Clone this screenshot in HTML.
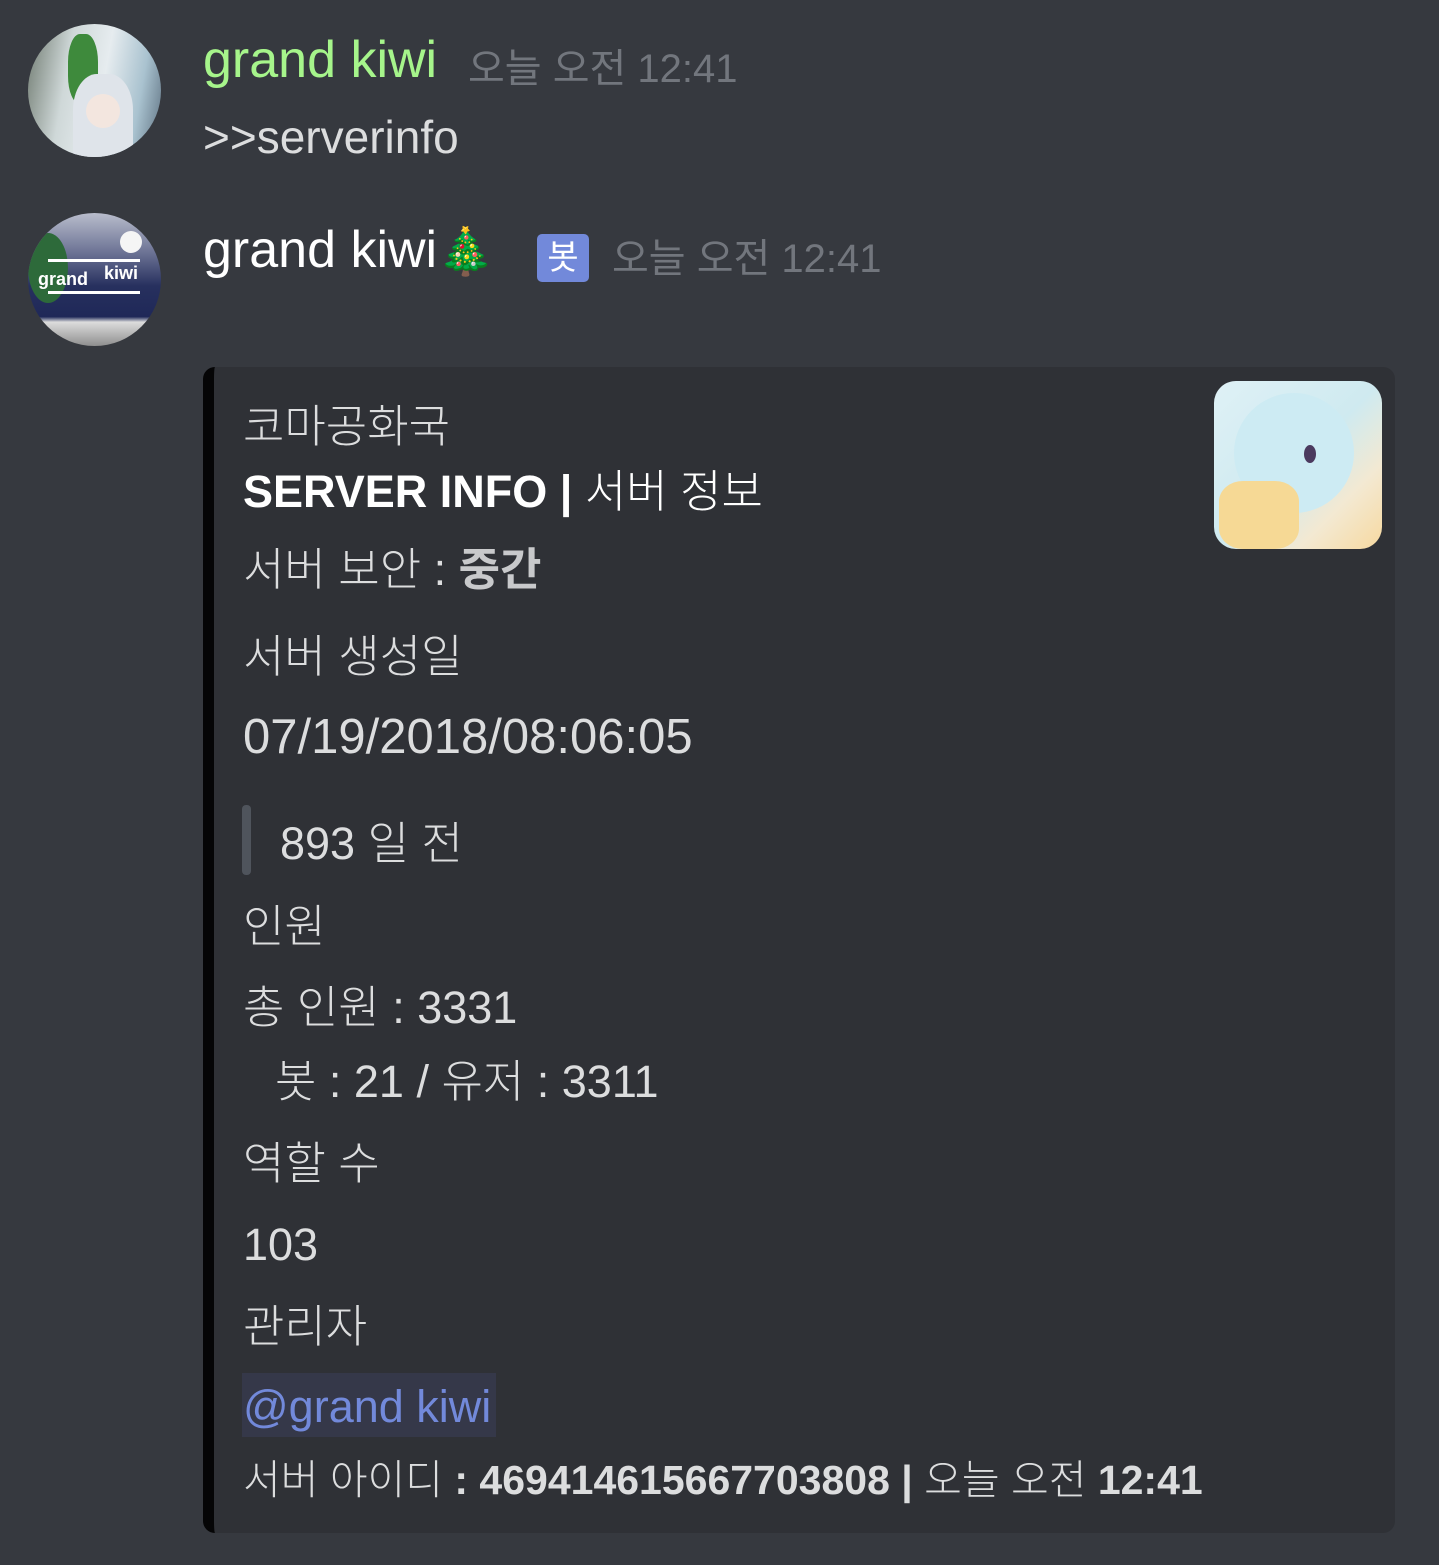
<!DOCTYPE html>
<html><head><meta charset="utf-8"><style>
body{margin:0;width:1439px;height:1565px;background:#36393f;overflow:hidden;font-family:"Liberation Sans","Noto Sans CJK KR",sans-serif;color:#dcddde;position:relative}
.a{position:absolute;white-space:nowrap}
.av{position:absolute;width:133px;height:133px;border-radius:50%;overflow:hidden}
.ts{color:#72767d;font-size:38px}
.l{position:absolute;left:243px;font-size:45px;line-height:64px;white-space:nowrap;font-weight:300}
b{font-weight:700}
</style></head><body>
<div class="av" style="left:28px;top:24px;background:linear-gradient(100deg,#6f7a70 0%,#cfd8d8 30%,#e6ecef 55%,#a9c2cf 80%,#5d7080 100%)">
 <div style="position:absolute;left:40px;top:10px;width:30px;height:70px;background:#3e8a3c;border-radius:40%"></div>
 <div style="position:absolute;left:45px;top:50px;width:60px;height:90px;background:#dfe4ea;border-radius:40% 40% 10% 10%"></div>
 <div style="position:absolute;left:58px;top:70px;width:34px;height:34px;background:#f3e6df;border-radius:50%"></div>
</div>
<div class="a" style="left:203px;top:30px;font-size:52px;color:#a6f58b">grand kiwi</div>
<div class="a ts" style="left:468px;top:36px;font-size:40px">오늘 오전 12:41</div>
<div class="a" style="left:203px;top:110px;font-size:46px">&gt;&gt;serverinfo</div>

<div class="av" style="left:28px;top:213px;background:linear-gradient(180deg,#b9bdcc 0%,#6b7294 30%,#27305e 55%,#1f2858 78%,#dcdcdc 82%,#8f8f8f 100%)">
 <div style="position:absolute;left:0;top:20px;width:40px;height:70px;background:#2d6a3a;border-radius:50%"></div>
 <div style="position:absolute;left:92px;top:18px;width:22px;height:22px;background:#f5f5f5;border-radius:50%"></div>
 <div style="position:absolute;left:20px;top:46px;width:92px;height:3px;background:#fff"></div>
 <div style="position:absolute;left:20px;top:78px;width:92px;height:3px;background:#fff"></div>
 <div class="a" style="left:10px;top:56px;font-size:18px;font-weight:700;color:#fff">grand</div>
 <div class="a" style="left:76px;top:50px;font-size:18px;font-weight:700;color:#fff">kiwi</div>
</div>
<div class="a" style="left:203px;top:220px;font-size:52px;color:#fff">grand kiwi<span style="font-size:46px">🎄</span></div>
<div class="a" style="left:537px;top:234px;width:52px;height:48px;background:#7289da;border-radius:5px;color:#fff;font-size:34px;text-align:center;line-height:48px">봇</div>
<div class="a ts" style="left:612px;top:226px;font-size:40px">오늘 오전 12:41</div>

<div class="a" style="left:203px;top:367px;width:1192px;height:1166px;background:#2f3136;border-radius:12px;border-left:11px solid #050506;box-sizing:border-box"></div>
<div class="a" style="left:1214px;top:381px;width:168px;height:168px;border-radius:22px;background:linear-gradient(135deg,#dff1f6 0%,#cfeaf0 50%,#f3e9d2 75%,#f7d9a0 100%);overflow:hidden">
 <div style="position:absolute;left:20px;top:12px;width:120px;height:120px;background:#cdebf3;border-radius:50%"></div>
 <div style="position:absolute;left:90px;top:64px;width:12px;height:18px;background:#4b3a5e;border-radius:50%"></div>
 <div style="position:absolute;left:5px;top:100px;width:80px;height:68px;background:#f6d995;border-radius:30%"></div>
</div>

<div class="l" style="top:395px">코마공화국</div>
<div class="l" style="top:460px;color:#fff"><b>SERVER INFO |</b> 서버 정보</div>
<div class="l" style="top:538px">서버 보안 : <b style="color:#c8c9cb">중간</b></div>
<div class="l" style="top:625px">서버 생성일</div>
<div class="l" style="top:705px;font-size:49px">07/19/2018/08:06:05</div>
<div class="a" style="left:242px;top:805px;width:9px;height:70px;background:#4f545c;border-radius:4px"></div>
<div class="l" style="left:280px;top:812px">893 일 전</div>
<div class="l" style="top:895px">인원</div>
<div class="l" style="top:976px">총 인원 : 3331</div>
<div class="l" style="left:275px;top:1050px">봇 : 21 / 유저 : 3311</div>
<div class="l" style="top:1132px">역할 수</div>
<div class="l" style="top:1213px">103</div>
<div class="l" style="top:1295px">관리자</div>
<div class="a" style="left:242px;top:1373px;width:254px;height:64px;background:#353849"></div>
<div class="l" style="top:1375px;color:#7289da;font-weight:400">@grand kiwi</div>
<div class="l" style="top:1448px;font-size:41px">서버 아이디 <b>: 469414615667703808 |</b> 오늘 오전 <b>12:41</b></div>
</body></html>
